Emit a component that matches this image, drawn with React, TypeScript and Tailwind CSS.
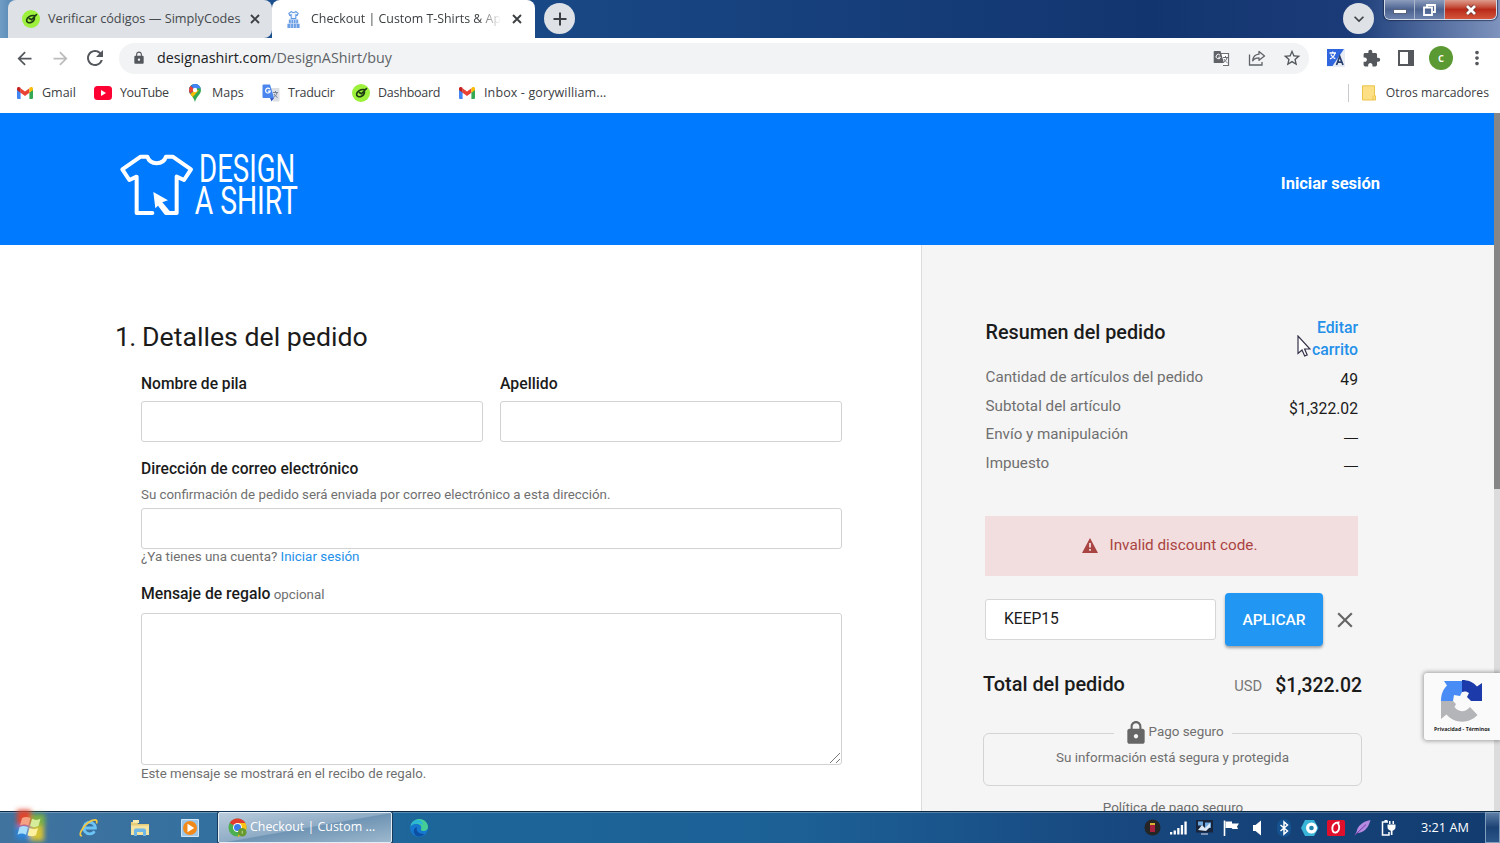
import { ReactNode } from 'react';
import {
  MdArrowBack,
  MdArrowForward,
  MdClose,
  MdExtension,
  MdKeyboardArrowDown,
  MdLock,
  MdMoreVert,
  MdRefresh,
  MdStarBorder,
} from 'react-icons/md';

/* ---------- Icons ---------- */

const TabCloseIcon = () => (
  <svg viewBox="0 0 10 10" className="size-2.5 shrink-0" stroke="#3c4043" strokeWidth="1.900">
    <path d="m1 1 8 8M9 1 1 9" />
  </svg>
);

const NewTabIcon = () => (
  <svg viewBox="0 0 14 14" className="size-3.5" stroke="#3c4043" strokeWidth="2">
    <path d="M7 .5v13M.5 7h13" />
  </svg>
);

const SimplyCodesIcon = () => (
  <svg viewBox="0 0 18 18" className="size-[18px]">
    <circle cx="9" cy="9" r="9" fill="#9df03c" />
    <path d="M14.500 4.500 9.500 9.800 7.300 8.500M12 5.500C8.500 5 5 7.500 4.600 10c-.3 2.600 2.600 3.300 4.900 2.300 1.800-.8 2.900-2.400 3-4.300" fill="none" stroke="#1c3a12" strokeWidth="1.600" strokeLinecap="round" />
  </svg>
);

const ShirtFavicon = () => (
  <svg viewBox="0 0 16 20" className="h-[19px] w-[15px]">
    <path d="M5.500 1.500 3 3.500l1 2 1.500-.6V9h5V4.900l1.500.6 1-2-2.500-2c-1 1.500-4 1.500-5 0Z" fill="#eef5fd" stroke="#5b94e0" strokeWidth="1.100" />
    <path d="M3 10h10v4H3zM1.500 14.500h13V19h-13z" fill="#6d9fe4" />
    <path d="M5.500 10v4M8 10v9M10.500 10v4M5 15v4M11 15v4" stroke="#c7dcf7" strokeWidth=".9" />
  </svg>
);

const GmailIcon = () => (
  <svg viewBox="0 0 16 12" className="h-3 w-4">
    <path d="M0 1.500V11a1 1 0 0 0 1 1h2.600V5.300z" fill="#4285f4" />
    <path d="M16 1.500V11a1 1 0 0 1-1 1h-2.600V5.300z" fill="#34a853" />
    <path d="M3.600 1.200 8 4.600l4.400-3.400v4.500L8 9 3.600 5.700z" fill="#ea4335" />
    <path d="M0 1.700C0 .1 1.700-.6 3 .4l.6.5v4.800L0 3z" fill="#c5221f" />
    <path d="M16 1.700c0-1.600-1.700-2.300-3-1.300l-.6.500v4.800L16 3z" fill="#fbbc04" />
  </svg>
);

const YouTubeIcon = () => (
  <svg viewBox="0 0 18 14" className="h-3.5 w-[18px]">
    <rect width="18" height="14" rx="3.500" fill="#ff0033" />
    <path d="M7 4v6l5-3z" fill="#fff" />
  </svg>
);

const MapsIcon = () => (
  <svg viewBox="0 0 12 18" className="h-[18px] w-3">
    <clipPath id="pin">
      <path d="M6 0a6 6 0 0 1 6 6c0 4.500-4.500 6-6 12C4.500 12 0 10.500 0 6a6 6 0 0 1 6-6Z" />
    </clipPath>
    <g clipPath="url(#pin)">
      <path d="M0 0h12v18H0z" fill="#34a853" />
      <path d="M-2 13 12-1 4-2-2 3z" fill="#1a73e8" />
      <path d="M0 0 6 6-1 11z" fill="#ea4335" />
      <path d="M5 7-1 12l3 3 8-9z" fill="#fbbc04" />
      <path d="M5-1h8v6L9 4 6 6 3 2z" fill="#4285f4" />
    </g>
    <circle cx="6" cy="6" r="2.200" fill="#fff" />
  </svg>
);

const TranslateIcon = () => (
  <svg viewBox="0 0 18 18" className="size-[18px]">
    <path d="M8 4h8.500a1 1 0 0 1 1 1v11.500a1 1 0 0 1-1 1H11z" fill="#dcdfe3" />
    <path d="M11 8.500h5M13.500 7v1.500M15 8.500c-.5 2.500-2 4-3.500 5M12 10c.7 1.500 2 2.700 3.500 3.500" stroke="#72829a" fill="none" />
    <path d="M1.500.5H8L12 14H1.500a1 1 0 0 1-1-1V1.500a1 1 0 0 1 1-1z" fill="#4a86ee" />
    <path d="m8 14 4 0-2.500 3.500z" fill="#3158c4" />
    <path d="M7.800 5A2.400 2.400 0 1 0 8.300 7.200H6" stroke="#fff" strokeWidth="1.200" fill="none" />
  </svg>
);

const PageTranslateIcon = () => (
  <svg viewBox="0 0 17 17" className="size-[17px]">
    <path d="M8 3.500h7.500v12H10" fill="#fff" stroke="#6b6f74" strokeWidth="1.200" />
    <path d="M10 7.500h5M12.500 6v1.500M14 7.500c-.4 2.200-1.500 3.600-3 4.600M11 9c.6 1.500 2 3 3.500 3.800" stroke="#6b6f74" fill="none" />
    <path d="M1.500 1h6L11 13H1.500A.8.8 0 0 1 .7 12V1.800a.8.8 0 0 1 .8-.8z" fill="#5f6368" />
    <path d="M7 5.200A2.200 2.200 0 1 0 7.400 7.200H5.300" stroke="#fff" fill="none" />
  </svg>
);

const ShareIcon = () => (
  <svg viewBox="0 0 18 16" className="h-4 w-[18px]" fill="none" stroke="#5f6368" strokeWidth="1.300">
    <path d="M1.500 4.500v10.500h12.500v-3" />
    <path d="M11 1.500 16.500 6 11 10.300V7.800c-3 0-5 .8-6.300 3C5 7 7.500 4.500 11 4.200z" strokeLinejoin="round" />
  </svg>
);

const ExtensionTranslateIcon = () => (
  <svg viewBox="0 0 18 18" className="size-[18px]">
    <path d="M0 0h18v18H0z" fill="#e8edf5" />
    <path d="M0 0h17L5.500 17H0z" fill="#2f66dd" />
    <path d="M2.500 4h6.500M5.700 2.500V4M8 4C7.500 7 5 9 3 9.800M3.800 5.500C5 7.500 6.500 9 8.300 9.700" stroke="#fff" strokeWidth="1.300" fill="none" />
    <path d="m9.500 16 3.200-8.500L16 16M10.600 13.200h4.200" stroke="#263f6e" strokeWidth="1.700" fill="none" />
  </svg>
);

const ReadingListIcon = () => (
  <svg viewBox="0 0 16 16" className="size-4">
    <path d="M1 1h14v14H1z" fill="#fff" stroke="#54585d" strokeWidth="2" />
    <path d="M10 1h5v14h-5z" fill="#54585d" />
  </svg>
);

const FolderIcon = () => (
  <svg viewBox="0 0 14 16" className="h-4 w-3.5">
    <path d="M.5.8h12v10H13.500V15H.5z" fill="#fde085" stroke="#ecc34b" />
    <path d="M11 10.800v4" stroke="#ecc34b" />
  </svg>
);

const WarningIcon = () => (
  <svg viewBox="0 0 16 15" className="mr-3 h-[15px] w-4">
    <path d="M8 0 16 15H0z" fill="#a94442" />
    <path d="M8 5v4.500M8 11v1.800" stroke="#f2dede" strokeWidth="1.800" />
  </svg>
);

const ShirtLogo = () => (
  <svg viewBox="54 30 546 210" className="h-[70px] w-[182px] overflow-visible">
    <path
      d="M157 219H110V110L88 120 67 88 122 50h20c8 26 48 26 56 0h20l55 38-21 32-22-10v109h-32l-18-24"
      fill="none"
      stroke="#fff"
      strokeWidth="12"
      strokeLinejoin="round"
      strokeLinecap="round"
    />
    <path d="m160 156 44 25-17 6 22 26-10 8-22-27-11 11z" fill="#fff" />
    <text x="297" y="125" textLength="289" lengthAdjust="spacingAndGlyphs" fill="#fff" fontSize="115" fontWeight="400">DESIGN</text>
    <text x="284" y="222" textLength="310" lengthAdjust="spacingAndGlyphs" fill="#fff" fontSize="115" fontWeight="400">A SHIRT</text>
  </svg>
);

const RecaptchaIcon = () => (
  <svg viewBox="0 0 42 42" className="size-[42px]">
    <path d="M21 0c6 0 11 2 15 6.500L41 3v18H30l-4-4 2-4c-2-1.500-4-2-7-1z" fill="#1c3aa9" />
    <path d="M0 21C0 14 2 9.500 6 5.500L3 1h18v11l-2 4-6-1-1 6z" fill="#4a8cf5" />
    <path d="M0 21h12l3 3-1.500 3C17 32 24 33 29 27l7.500 8C28 44 14 44 5.500 34.500L0 39z" fill="#b4b5b8" />
  </svg>
);

const StartOrb = () => (
  <svg viewBox="0 0 40 36" className="h-9 w-10 overflow-visible">
    <defs>
      <filter id="glow" x="-30%" y="-30%" width="160%" height="160%">
        <feGaussianBlur stdDeviation="2.500" />
      </filter>
    </defs>
    <g filter="url(#glow)">
      <path d="M6 2h14v16H6z" fill="#e0452f" />
      <path d="M20 6h14v12H20z" fill="#7cb342" />
      <path d="M5 18h14v13H5z" fill="#2c86dd" />
      <path d="M19 18h14v15H19z" fill="#d6c336" />
    </g>
    <path d="M11 10c3-1.500 5-1.500 8.500 0l-2 7.500C14 16 12 16 9 17.500z" fill="#f5a183" />
    <path d="M21 10.800c3 1.500 5.500 1.500 8.500 0L27.500 18c-3 1.500-5.500 1.500-8.500 0z" fill="#d5ec9b" />
    <path d="M8.500 19.200c3-1.500 5-1.500 8.500 0l-2 7.500c-3.500-1.500-5.500-1.500-8.500 0z" fill="#a8ddfb" />
    <path d="M18.500 20c3 1.500 5.500 1.500 8.500 0l-2 7.200c-3 1.500-5.500 1.500-8.500 0z" fill="#fdf0a0" />
  </svg>
);

const ExplorerEIcon = () => (
  <svg viewBox="0 0 20 20" className="size-5" fill="none">
    <path d="M15.500 13.200a5.800 5.800 0 1 1 .9-3.200H6" stroke="#6cc3f5" strokeWidth="2.800" />
    <path d="M3 17.500C-1 19 2 10 9 4.800 14 1 19.500.5 17.500 5.500" stroke="#f2c744" strokeWidth="1.700" />
  </svg>
);

const FileExplorerIcon = () => (
  <svg viewBox="0 0 20 18" className="h-[18px] w-5">
    <path d="M1 3h6l1 2h11v11H1z" fill="#e5cc78" />
    <path d="M3 1h6v3H3z" fill="#f6eab0" />
    <path d="M1 6.500h18V16H1z" fill="#f4e3a1" />
    <path d="M4 17v-5.500a2 2 0 0 1 2-2h8a2 2 0 0 1 2 2V17h-3v-4H7v4z" fill="#6fb7e6" />
  </svg>
);

const MediaPlayerIcon = () => (
  <svg viewBox="0 0 18 18" className="size-[18px]">
    <path d="M.5.5h17v17H.5z" fill="#9cc6ea" stroke="#cfe5f7" />
    <circle cx="9" cy="9" r="7" fill="#f28a1b" />
    <path d="M6.500 4.800v8.400L13.200 9z" fill="#fff" />
  </svg>
);

const ChromeIcon = () => (
  <svg viewBox="0 0 20 20" className="size-[19px]">
    <circle cx="10" cy="10" r="9.500" fill="#4caf50" />
    <path d="M10 10 1.800 5.200A9.500 9.500 0 0 1 18.300 5.300z" fill="#e33b2e" />
    <path d="M10 5.300h8.300A9.500 9.500 0 0 1 10 19.500l4-7z" fill="#fbc116" />
    <circle cx="10" cy="10" r="4.700" fill="#fff" />
    <circle cx="10" cy="10" r="3.700" fill="#3b7ded" />
    <circle cx="15" cy="15" r="4.500" fill="#66992e" />
    <path d="M15 13.500v3" stroke="#c4dca5" />
  </svg>
);

const EdgeIcon = () => (
  <svg viewBox="0 0 18 18" className="size-[18px]">
    <circle cx="9" cy="9" r="9" fill="#1678cf" />
    <path d="M.5 7C2 2 5.500 0 9.500 0 14.500 0 18 4 18 7.800c0 3-2.300 4.200-4.500 4.200-1.800 0-3.300-.7-2.500-2C12.500 7 9 4.500 6 4.700 3.500 4.800 1.500 5.700.5 7Z" fill="#45cf97" />
    <path d="M.5 7C2 2.500 5.500.500 8.500 1c3.500.5 4.500 3 4 5.500C11 3.500 4 3.500.5 7Z" fill="#2ab5dd" />
    <path d="M7 8c-1.500 3 1 7.500 7.500 7-3 3.500-9 3.500-10.500-1C3 11 5 8.500 7 8Z" fill="#0c4fa3" />
  </svg>
);

const trayIcons: ReactNode[] = [
  <svg viewBox="0 0 17 17" className="size-[17px]">
    <circle cx="8.500" cy="8.500" r="8" fill="#252525" />
    <path d="M6 4.500h5V13H6z" fill="#a8203c" />
    <path d="M6 4h5v2H6z" fill="#d7b331" />
  </svg>,
  <svg viewBox="0 0 17 14" className="h-3.5 w-[17px]">
    <path d="M0 11h2.300v2.500H0zM3.600 9.500h2.300v4H3.600zM7.200 7h2.300v6.500H7.200zM10.800 4h2.300v9.500h-2.300zM14.400.5h2.300v13h-2.300z" fill="#fff" />
  </svg>,
  <svg viewBox="0 0 17 17" className="size-[17px]">
    <path d="M0 1h17v12.500H0z" fill="#18243a" />
    <path d="M2 2.500h5v4H2zM9 3.500h6v5.500H9z" fill="#6fa8df" />
    <path d="m2 11 4-5 3 3 5-5v4l-4 4z" fill="#dce9f5" />
    <path d="M5 14h7v2H5z" fill="#7992b5" />
  </svg>,
  <svg viewBox="0 0 17 16" className="h-4 w-[17px]">
    <path d="M1.500.5V16" stroke="#fff" strokeWidth="1.600" />
    <path d="M2.500 1.500H9v2h7l-2 3 1 2.500H9.500L8.500 8h-6z" fill="#fff" />
  </svg>,
  <svg viewBox="0 0 10 16" className="h-4 w-2.5">
    <path d="M1 5h2.500L9 .5v15L3.500 11H1z" fill="#fff" />
  </svg>,
  <svg viewBox="0 0 14 18" className="h-[18px] w-3.5">
    <rect width="14" height="18" rx="7" fill="#15528f" />
    <path d="m3.500 6 7 6L7 15V3l3.500 3-7 6" stroke="#fff" strokeWidth="1.500" fill="none" />
  </svg>,
  <svg viewBox="0 0 18 16" className="h-4 w-[18px]">
    <path d="M4 0h9l4.500 8L13 16H4L0 8z" fill="#39b5d8" />
    <circle cx="10.500" cy="8" r="5.500" fill="#fff" />
    <circle cx="10.500" cy="8" r="2.300" fill="#1c81ab" />
  </svg>,
  <svg viewBox="0 0 18 16" className="h-4 w-[18px]">
    <rect width="18" height="16" rx="1.500" fill="#e0102c" />
    <path d="M12.500 2.500c-5-.5-8 3-7 7.500 1 4 5.500 3 6.500-1 .6-2.500.3-4-1.500-6.500" stroke="#fff" strokeWidth="1.800" fill="none" />
  </svg>,
  <svg viewBox="0 0 17 16" className="h-4 w-[17px]">
    <path d="M16.500 0C9 1.500 3.500 5.500 2.500 12l-2 3.500 3-2.500c6 0 11-5 13-13Z" fill="#b58ae0" />
    <path d="M1 15 12 4.500" stroke="#6d3fa8" />
  </svg>,
  <svg viewBox="0 0 15 16" className="h-4 w-[15px]">
    <path d="M7 2H1.500v13H8v-3" stroke="#fff" strokeWidth="1.500" fill="none" />
    <path d="M3.500 0h3v2h-3zM8 1h1.500v3H8zM11.500 1H13v3h-1.500zM6.500 4.500h8V7c0 2-1.500 3.500-3 3.700V15H9.800v-4.300C8 10.500 6.500 9 6.500 7z" fill="#fff" />
  </svg>,
];

/* ---------- Browser chrome ---------- */

function TabStrip() {
  return (
    <div className="relative flex h-[38px] bg-[linear-gradient(90deg,#6f9dc4_0px,#5d8cb8_10px,#1b4f8e_270px,#184683_620px,#13356f_1150px,#1a3b78_1350px,#7e93bd_1500px)] pl-2">
      <div className="flex w-[264px] items-center rounded-t-lg rounded-br-lg bg-[#dee1e6] pl-3.5">
        <SimplyCodesIcon />
        <span className="mr-[9px] ml-2 w-[193px] shrink-0 text-[12.7px] whitespace-nowrap text-[#45494d]">Verificar códigos — SimplyCodes</span>
        <TabCloseIcon />
      </div>
      <div className="flex w-[263px] items-center rounded-t-lg bg-white pl-3.5">
        <ShirtFavicon />
        <span className="mt-px mr-[11px] ml-[10px] w-[190px] shrink-0 overflow-hidden mask-[linear-gradient(90deg,#000_88%,transparent)] text-[12.4px] whitespace-nowrap text-[#3c4043]">
          Checkout | Custom T-Shirts &amp; Ap
        </span>
        <TabCloseIcon />
      </div>
      <div className="mt-[3px] ml-[9px] flex size-[31px] items-center justify-center rounded-full bg-[#dee1e6]">
        <NewTabIcon />
      </div>
      <div className="mt-[3px] mr-[10px] ml-auto flex size-[31px] items-center justify-center rounded-full bg-[#dee1e6]">
        <MdKeyboardArrowDown className="size-5 text-[#3c4043]" />
      </div>
      <div className="mr-[3px] flex h-5 overflow-hidden rounded-b-md border border-t-0 border-[#d3dbe8] shadow-[0_0_1px_1px_rgba(20,30,60,0.6)]">
        <div className="flex w-[30px] items-center justify-center border-r border-[#aab6cc] bg-linear-to-b from-[#8d9dbd] via-[#4c628f] to-[#6d83ad]">
          <div className="mt-1 h-[5px] w-3.5 border border-[#59627a] bg-white" />
        </div>
        <div className="flex w-[30px] items-center justify-center border-r border-[#aab6cc] bg-linear-to-b from-[#8d9dbd] via-[#4c628f] to-[#6d83ad]">
          <svg viewBox="0 0 13 12" className="h-3 w-[13px]" fill="none" stroke="#fff" strokeWidth="1.800">
            <path d="M4 3V1h8v7h-2" />
            <path d="M1 3.500h8V11H1z" />
          </svg>
        </div>
        <div className="flex w-[51px] items-center justify-center bg-linear-to-b from-[#dd9a8c] via-[#b92a18] to-[#d5553b]">
          <svg viewBox="0 0 14 12" className="mt-px h-3 w-3.5" fill="none">
            <path d="m3 2 8 8M11 2l-8 8" stroke="#6b3030" strokeWidth="4.500" />
            <path d="m3 2 8 8M11 2l-8 8" stroke="#fff" strokeWidth="2.800" />
          </svg>
        </div>
      </div>
    </div>
  );
}

function Toolbar() {
  return (
    <div className="flex h-10 items-center bg-white pl-[14px] text-[#54585d]">
      <MdArrowBack className="size-[21px]" />
      <MdArrowForward className="ml-[15px] size-[21px] text-[#babcbe]" />
      <MdRefresh className="ml-[12px] size-[24px]" />
      <div className="ml-[12px] flex h-[31px] w-[1190px] items-center rounded-full bg-[#f1f3f4] pr-[7px] pl-[13px]">
        <MdLock className="size-[14px]" />
        <span className="ml-[11px] text-[14.3px] text-[#5f6368]">
          <span className="text-[#202124]">designashirt.com</span>/DesignAShirt/buy
        </span>
        <div className="ml-auto flex items-center">
          <PageTranslateIcon />
          <span className="ml-[18px]"><ShareIcon /></span>
          <MdStarBorder className="ml-[16px] size-5" />
        </div>
      </div>
      <span className="ml-[18px]"><ExtensionTranslateIcon /></span>
      <MdExtension className="ml-[17px] size-[19px]" />
      <span className="ml-[17px]"><ReadingListIcon /></span>
      <span className="ml-[15px] flex size-6 items-center justify-center rounded-full bg-[#5b9a32] text-[12px] font-semibold text-white">c</span>
      <MdMoreVert className="ml-[13px] size-[22px]" />
    </div>
  );
}

const bookmarks = [
  { label: 'Gmail', icon: <GmailIcon />, box: 'w-[77px]', gap: 'ml-[9px]' },
  { label: 'YouTube', icon: <YouTubeIcon />, box: 'w-[95px] tracking-[-0.03em]', gap: 'ml-2' },
  { label: 'Maps', icon: <MapsIcon />, box: 'w-[73px]', gap: 'ml-[11px]' },
  { label: 'Traducir', icon: <TranslateIcon />, box: 'w-[90px] tracking-[-0.02em]', gap: 'ml-2' },
  { label: 'Dashboard', icon: <SimplyCodesIcon />, box: 'w-[107px] tracking-[-0.02em]', gap: 'ml-2' },
  { label: 'Inbox - gorywilliam...', icon: <GmailIcon />, box: 'w-[160px] tracking-[0.01em]', gap: 'ml-[9px]' },
];

function BookmarksBar() {
  return (
    <div className="flex h-[35px] items-center bg-white pb-[5px] pl-[17px] text-[12.5px] text-[#3c4043]">
      {bookmarks.map(({ label, icon, box, gap }) => (
        <div key={label} className={`flex items-center whitespace-nowrap ${box}`}>
          {icon}
          <span className={gap}>{label}</span>
        </div>
      ))}
      <div className="mr-[11px] ml-auto flex items-center">
        <span className="mr-[13px] h-[18px] w-px bg-[#c8cacd]" />
        <FolderIcon />
        <span className="ml-2.5 text-[12.2px]">Otros marcadores</span>
      </div>
    </div>
  );
}

/* ---------- Page ---------- */

function OrderDetails() {
  return (
    <section className="h-full w-[921px] shrink-0 bg-white pt-[77px] pl-[115px]">
      <h1 className="flex h-[30px] items-center text-[26.7px] text-[#1b1b1b]">
        <span className="w-[27px] tracking-tight">1.</span>Detalles del pedido
      </h1>
      <div className="ml-[26px] w-[701px] text-[13.35px] text-[#6f6f6f]">
        <div className="mt-[21px] flex gap-[17px]">
          <label className="block flex-1">
            <span className="block text-[15.6px] leading-[22px] font-medium text-[#1b1b1b]">Nombre de pila</span>
            <span className="mt-[6px] block h-[41px] rounded-[3px] border border-[#d2d2d2]" />
          </label>
          <label className="block flex-1">
            <span className="block text-[15.8px] leading-[22px] font-medium text-[#1b1b1b]">Apellido</span>
            <span className="mt-[6px] block h-[41px] rounded-[3px] border border-[#d2d2d2]" />
          </label>
        </div>
        <p className="mt-[16px] text-[15.6px] leading-[22px] font-medium text-[#1b1b1b]">Dirección de correo electrónico</p>
        <p className="mt-[5px] text-[13.3px] leading-5">Su confirmación de pedido será enviada por correo electrónico a esta dirección.</p>
        <div className="mt-[3px] h-[41px] rounded-[3px] border border-[#d2d2d2]" />
        <p className="-mt-[2px] text-[13.4px] leading-5">
          ¿Ya tienes una cuenta? <span className="text-[#2490ea]">Iniciar sesión</span>
        </p>
        <p className="mt-[16px] leading-[22px]">
          <span className="text-[15.75px] font-medium text-[#1b1b1b]">Mensaje de regalo</span> opcional
        </p>
        <div className="mt-[7px] flex h-[152px] items-end justify-end rounded-[3px] border border-[#d2d2d2]">
          <svg viewBox="0 0 12 12" className="size-3" stroke="#777" fill="none">
            <path d="M1 11 11 1M7 11l4-4" />
          </svg>
        </div>
        <p className="-mt-px text-[13.25px] leading-5">Este mensaje se mostrará en el recibo de regalo.</p>
      </div>
    </section>
  );
}

const summaryRows = [
  ['Cantidad de artículos del pedido', '49'],
  ['Subtotal del artículo', '$1,322.02'],
  ['Envío y manipulación', '—'],
  ['Impuesto', '—'],
];

function OrderSummary() {
  return (
    <section className="h-full flex-1 border-l border-[#dcdcdc] bg-[#f5f5f5] pt-[72px] pl-[61px]">
      <div className="w-[380px]">
        <div className="mr-[5px] ml-[2.5px] flex items-start justify-between">
          <h2 className="mt-1 text-[19.8px] leading-[24px] font-medium text-[#1b1b1b]">Resumen del pedido</h2>
          <a className="w-[60px] text-right text-[15.8px] leading-[22px] font-medium text-[#2490ea]">Editar carrito</a>
        </div>
        <dl className="mt-[2.3px] mr-[5px] ml-[2.5px]">
          {summaryRows.map(([label, value]) => (
            <div key={label} className="flex h-[28.600px] items-center justify-between">
              <dt className="text-[15.2px] text-[#6f6f6f]">{label}</dt>
              {value === '—' ? (
                <dd className="pt-[5px] font-['Liberation_Sans',sans-serif] text-[14px] text-[#1b1b1b]">{value}</dd>
              ) : (
                <dd className="pt-[5px] text-[15.7px] text-[#1b1b1b]">{value}</dd>
              )}
            </div>
          ))}
        </dl>
        <div className="mt-[38.7px] mr-[5px] ml-0.5 flex h-[60px] items-center justify-center bg-[#f2dede] pr-1 pb-[2px] text-[15.27px] text-[#a94442]">
          <WarningIcon />
          Invalid discount code.
        </div>
        <div className="mt-[17px] ml-0.5 flex items-center">
          <div className="flex h-[41px] w-[231px] items-center rounded-[3px] border border-[#d6d6d6] bg-white pl-[18px] text-[15.6px] text-[#1b1b1b]">
            KEEP15
          </div>
          <button className="ml-[9px] h-[53px] w-[98px] rounded-[4px] bg-[#2196f3] pt-0.5 text-[15.5px] font-medium text-white shadow-[0_2px_3px_rgba(0,0,0,0.35)]">
            APLICAR
          </button>
          <MdClose className="ml-[9px] size-[26px] text-[#666]" />
        </div>
        <div className="mt-[26px] flex h-[26px] items-center text-[19.9px] font-medium text-[#1b1b1b]">
          Total del pedido
          <span className="mt-[2px] ml-auto text-[14.7px] font-normal text-[#777]">USD</span>
          <span className="mr-px ml-[13px] text-[19.4px]">$1,322.02</span>
        </div>
        <fieldset className="mt-[23px] h-[65px] w-[379px] rounded-[6px] border border-[#d4d4d4] text-center text-[13.4px] text-[#6f6f6f]">
          <legend className="mx-auto flex h-6 items-center pr-[6px] pl-[10px]">
            <span className="flex w-[102px] items-center">
              <MdLock className="-ml-px size-[26px] shrink-0 text-[#666]" />
              <span className="mb-0.5 whitespace-nowrap">Pago seguro</span>
            </span>
          </legend>
          <p className="mt-[3px] leading-5">Su información está segura y protegida</p>
        </fieldset>
        <p className="mt-[12px] text-center text-[13.45px] leading-5 text-[#6f6f6f]">Política de pago seguro</p>
      </div>
    </section>
  );
}

function CheckoutPage() {
  return (
    <main className="flex h-[698px] overflow-hidden font-[Roboto,sans-serif]">
      <div className="flex w-[1494px] flex-col">
        <header className="flex h-[132px] shrink-0 items-start justify-between bg-[#007bff] pt-[37px] pr-[114px] pl-[118px]">
          <ShirtLogo />
          <a className="mt-[23px] text-[16.5px] leading-[22px] font-bold text-white">Iniciar sesión</a>
        </header>
        <div className="flex min-h-0 flex-1">
          <OrderDetails />
          <OrderSummary />
        </div>
      </div>
      <div className="w-1.5 bg-[#dcdcdc]">
        <div className="h-[376px] bg-[#868686]" />
      </div>
    </main>
  );
}

/* ---------- Taskbar ---------- */

function Taskbar() {
  return (
    <footer className="flex h-8 items-center border-t border-[#0d2a45] bg-[linear-gradient(90deg,#41739f_0px,#34709f_200px,#1d669a_420px,#1c6096_800px,#17477e_1130px,#123c70_1500px)] text-white shadow-[inset_0_1px_0_rgba(255,255,255,0.25)]">
      <div className="-mt-1 ml-[11px]"><StartOrb /></div>
      <span className="ml-[28px]"><ExplorerEIcon /></span>
      <span className="ml-[31px]"><FileExplorerIcon /></span>
      <span className="ml-[31px]"><MediaPlayerIcon /></span>
      <div className="ml-[19px] flex h-[31px] w-[174px] items-center rounded-[2px] border border-[#e3edf5] bg-[linear-gradient(170deg,#b9cbdb_0%,#8facc6_50%,#6f94b4_52%,#9db8cd_100%)] pl-[9px] text-[12.4px] shadow-[0_0_0_1px_#163a5c]">
        <ChromeIcon />
        <span className="ml-[3px] whitespace-nowrap">Checkout | Custom ...</span>
      </div>
      <span className="ml-[18px]"><EdgeIcon /></span>
      <div className="ml-auto flex items-center">
        {trayIcons.map((icon, i) => (
          <span key={i} className="flex w-[26.300px] justify-center">{icon}</span>
        ))}
      </div>
      <span className="ml-[19px] w-[64px] text-[12.7px] whitespace-nowrap">3:21 AM</span>
      <div className="h-full w-[15px] border border-[#7f9dbd] bg-linear-to-b from-[#5c7ea6] via-[#1c4274] to-[#2c5688]" />
    </footer>
  );
}

export default function App() {
  return (
    <div className="relative h-[843px] w-[1500px] overflow-hidden bg-white font-['Open_Sans','Noto_Sans',sans-serif]">
      <TabStrip />
      <Toolbar />
      <BookmarksBar />
      <CheckoutPage />
      <Taskbar />

      {/* reCAPTCHA badge */}
      <div className="absolute top-[673px] right-0 flex h-[67px] w-[76px] flex-col items-center rounded-l-[3px] bg-[#fafafa] pt-[7px] shadow-[0_0_4px_1px_rgba(0,0,0,0.35)]">
        <RecaptchaIcon />
        <span className="mt-[2px] text-[5.2px] leading-[10px] font-bold whitespace-nowrap text-[#222]">Privacidad - Términos</span>
      </div>

      {/* Mouse pointer */}
      <svg viewBox="0 0 14 22" className="absolute top-[335px] left-[1297px] h-[22px] w-3.5">
        <path d="M1 1v17.500l4-3.500 2.700 6 2.500-1.100L7.600 14H13z" fill="#fff" stroke="#33334a" strokeWidth="1.200" />
      </svg>
    </div>
  );
}
